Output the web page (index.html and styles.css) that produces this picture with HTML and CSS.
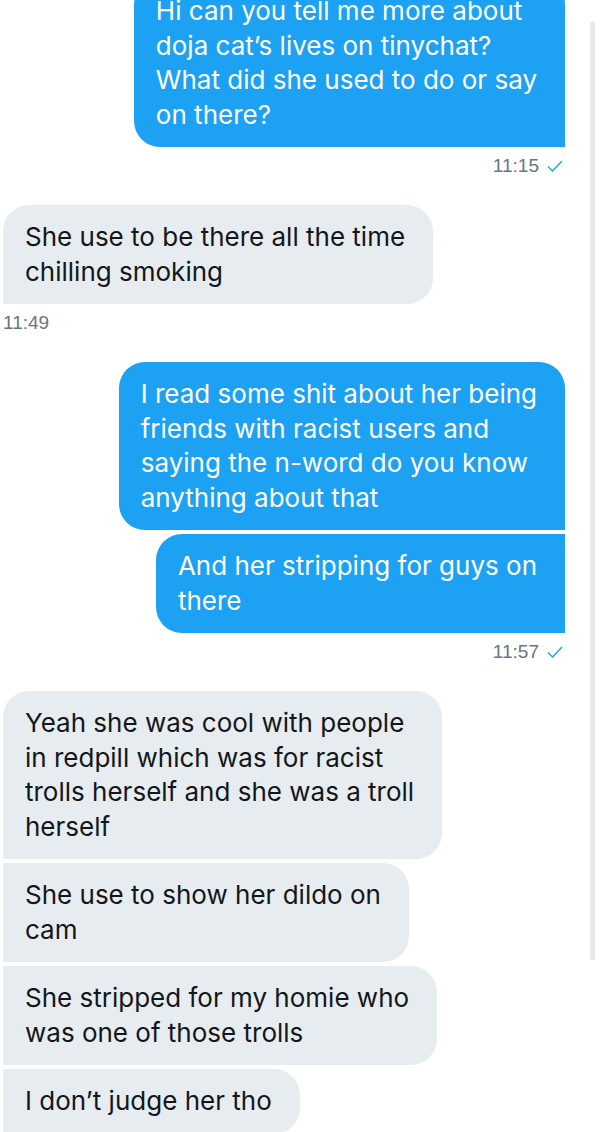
FILE: index.html
```html
<!DOCTYPE html>
<html lang="en">
<head>
    <meta charset="UTF-8">
    <meta name="viewport" content="width=device-width, initial-scale=1.0">
    <title>Messages</title>
    <link rel="stylesheet" href="styles.css">
</head>
<body>
    <div class="chat">
        <!-- sent -->
        <div class="group sent">
            <div class="bubble">Hi can you tell me more about<br>doja cat’s lives on tinychat?<br>What did she used to do or say<br>on there?</div>
            <div class="time">11:15 <svg class="check" width="16" height="12" viewBox="0 0 16 12"><polyline points="1,6.5 5.5,11 15,1" /></svg></div>
        </div>

        <!-- received -->
        <div class="group received">
            <div class="bubble">She use to be there all the time<br>chilling smoking</div>
            <div class="time">11:49</div>
        </div>

        <div class="group sent">
            <div class="bubble">I read some shit about her being<br>friends with racist users and<br>saying the n-word do you know<br>anything about that</div>
            <div class="bubble">And her stripping for guys on<br>there</div>
            <div class="time">11:57 <svg class="check" width="16" height="12" viewBox="0 0 16 12"><polyline points="1,6.5 5.5,11 15,1" /></svg></div>
        </div>

        <div class="group received">
            <div class="bubble">Yeah she was cool with people<br>in redpill which was for racist<br>trolls herself and she was a troll<br>herself</div>
            <div class="bubble">She use to show her dildo on<br>cam</div>
            <div class="bubble">She stripped for my homie who<br>was one of those trolls</div>
            <div class="bubble">I don’t judge her tho</div>
        </div>
    </div>

    <!-- scroll indicator -->
    <div class="scrollbar"></div>
</body>
</html>
```

FILE: styles.css
```css
body {
    font-family: Inter, "Liberation Sans", Arial, sans-serif;
    background-color: #ffffff;
    margin: 0;
    padding: 0;
    height: 1132px;
    overflow: hidden;
    color: #14171a;
}

.chat {
    margin-top: -21px;
    padding: 0 35px 0 3px;
}

.group {
    display: flex;
    flex-direction: column;
    gap: 4px;
    margin-bottom: 28px;
}

.sent {
    align-items: flex-end;
}

.received {
    align-items: flex-start;
}

.bubble {
    box-sizing: border-box;
    white-space: nowrap;
    padding: 15px 28px 15px 22px;
    font-size: 26px;
    line-height: 34.5px;
    border-radius: 26px;
}

.sent .bubble {
    background-color: #1da1f2;
    color: #ffffff;
    border-bottom-right-radius: 0;
}

.sent .bubble + .bubble {
    border-top-right-radius: 0;
}

.received .bubble {
    background-color: #e6ecf0;
    color: #14171a;
    border-bottom-left-radius: 0;
}

.received .bubble + .bubble {
    border-top-left-radius: 0;
}

.time {
    margin-top: 4px;
    height: 22px;
    line-height: 22px;
    font-family: "Liberation Sans", Arial, sans-serif;
    font-size: 19px;
    color: #687582;
    display: flex;
    align-items: center;
    gap: 8px;
}

.sent .time {
    padding-right: 2px;
}

.check {
    fill: none;
    stroke: #1da1f2;
    stroke-width: 1.4;
}

.scrollbar {
    position: absolute;
    left: 590px;
    top: 22px;
    width: 5px;
    height: 938px;
    background-color: #e9e9e9;
}
```
